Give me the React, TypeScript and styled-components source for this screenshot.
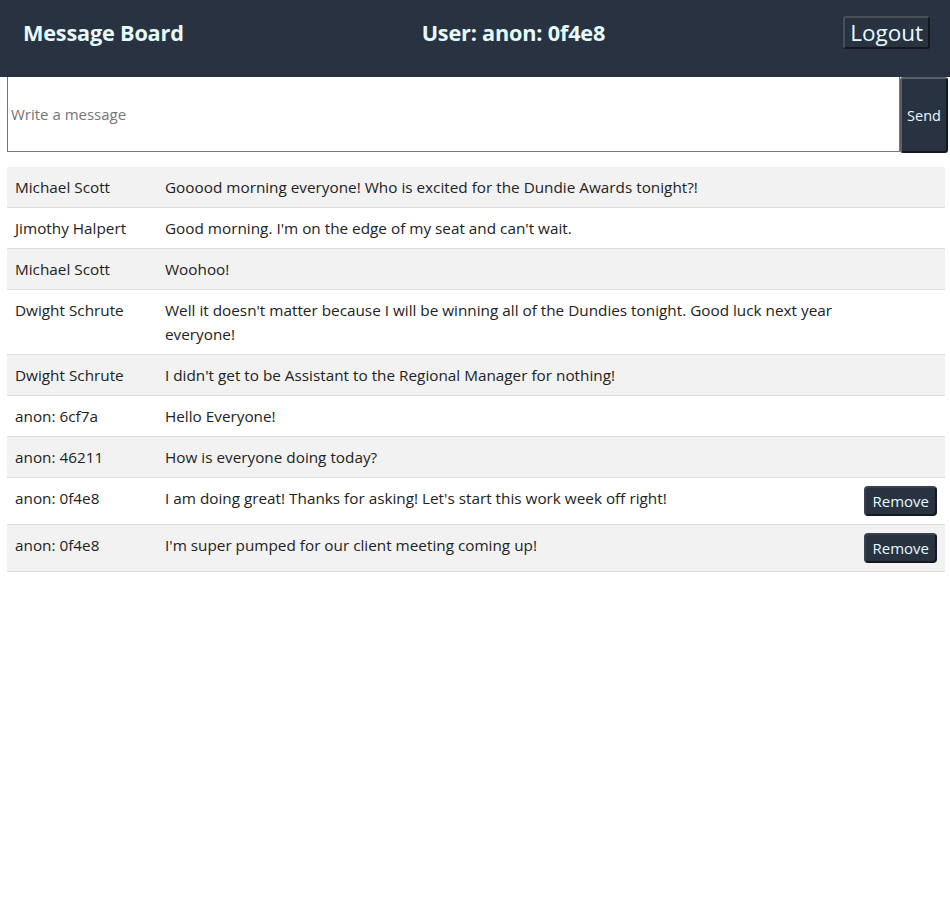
import React from "react";
import styled, { createGlobalStyle } from "styled-components";

const Global = createGlobalStyle`
  body {
    margin: 0;
    font-family: "Open Sans", "Noto Sans", sans-serif;
    background: #ffffff;
    color: #212529;
  }
  * { box-sizing: border-box; }
`;

const Header = styled.header`
  height: 77px;
  background: #283241;
  display: flex;
  align-items: center;
  justify-content: space-between;
  padding: 0 20px 12px 23px;
`;

const Title = styled.h1`
  margin: 0;
  font-size: 21.7px;
  font-weight: 700;
  color: #e6fbff;
  letter-spacing: -0.2px;
`;

const Logout = styled.button`
  font-family: inherit;
  font-size: 22.5px;
  color: #e6fbff;
  background: #283241;
  border: 2px solid #4a5058;
  border-right-color: #15191f;
  border-bottom-color: #15191f;
  border-radius: 3px;
  padding: 0 5px;
  height: 33px;
  line-height: 27px;
`;

const Composer = styled.form`
  display: flex;
  margin: 0 2px 0 7px;
  height: 76px;
`;

const Input = styled.input`
  flex: 1;
  border: 1px solid #767676;
  border-top: none;
  font-family: inherit;
  font-size: 15px;
  padding: 0 3px;
  height: 75px;
  color: #222;
  &::placeholder { color: #757575; }
`;

const Send = styled.button`
  width: 48px;
  height: 76px;
  background: #283241;
  color: #e6fbff;
  font-family: inherit;
  font-size: 14.5px;
  border: 2px solid #5a5f66;
  border-right-color: #15191f;
  border-bottom-color: #15191f;
  border-radius: 3px;
  padding: 0;
`;

const Table = styled.table`
  margin: 14px 5px 0 7px;
  width: calc(100% - 12px);
  border-collapse: collapse;
  font-size: 15.3px;
  line-height: 24px;
  color: #222;
`;

const Row = styled.tr<{ $alt: boolean }>`
  background: ${(p) => (p.$alt ? "#f2f2f2" : "#ffffff")};
  border-bottom: 1px solid #dddddd;
`;

const Cell = styled.td<{ $w?: number; $right?: boolean }>`
  padding: 8px;
  vertical-align: top;
  width: ${(p) => (p.$w ? `${p.$w}px` : "auto")};
  text-align: ${(p) => (p.$right ? "right" : "left")};
`;

const Remove = styled.button`
  font-family: inherit;
  font-size: 15px;
  color: #e6fbff;
  background: #283241;
  border: 2px solid #15191f;
  border-top-color: #3a414c;
  border-left-color: #3a414c;
  border-radius: 4px;
  height: 30px;
  padding: 0 6px;
  line-height: 24px;
`;

const messages = [
  { user: "Michael Scott", text: "Gooood morning everyone! Who is excited for the Dundie Awards tonight?!" },
  { user: "Jimothy Halpert", text: "Good morning. I'm on the edge of my seat and can't wait." },
  { user: "Michael Scott", text: "Woohoo!" },
  { user: "Dwight Schrute", text: "Well it doesn't matter because I will be winning all of the Dundies tonight. Good luck next year everyone!" },
  { user: "Dwight Schrute", text: "I didn't get to be Assistant to the Regional Manager for nothing!" },
  { user: "anon: 6cf7a", text: "Hello Everyone!" },
  { user: "anon: 46211", text: "How is everyone doing today?" },
  { user: "anon: 0f4e8", text: "I am doing great! Thanks for asking! Let's start this work week off right!" },
  { user: "anon: 0f4e8", text: "I'm super pumped for our client meeting coming up!" },
];

const me = "anon: 0f4e8";

export default function App() {
  return (
    <>
      <Global />
      <Header>
        <Title>Message Board</Title>
        <Title>User: {me}</Title>
        <Logout>Logout</Logout>
      </Header>
      <Composer onSubmit={(e) => e.preventDefault()}>
        <Input placeholder="Write a message" />
        <Send>Send</Send>
      </Composer>
      <Table>
        <tbody>
          {messages.map((m, i) => (
            <Row key={i} $alt={i % 2 === 0}>
              <Cell $w={150}>{m.user}</Cell>
              <Cell>{m.text}</Cell>
              <Cell $w={89} $right>
                {m.user === me ? <Remove>Remove</Remove> : null}
              </Cell>
            </Row>
          ))}
        </tbody>
      </Table>
    </>
  );
}
